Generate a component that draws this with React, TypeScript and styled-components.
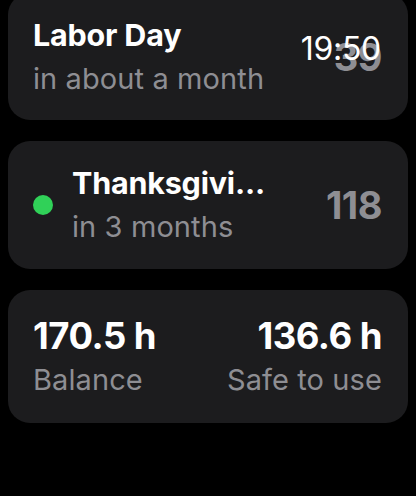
import React from 'react';
import styled, {createGlobalStyle} from 'styled-components';

const Global = createGlobalStyle`
  html, body {
    margin: 0;
    background: #000;
    font-family: Inter, "Noto Sans", sans-serif;
    -webkit-font-smoothing: antialiased;
  }
`;

const Screen = styled.div`
  position: relative;
  width: 416px;
  height: 496px;
  overflow: hidden;
  background: #000;
`;

const List = styled.div`
  display: flex;
  flex-direction: column;
  gap: 21px;
  padding: 0 8px;
  margin-top: -7px;
`;

const Card = styled.div<{ $h: number }>`
  height: ${p => p.$h}px;
  box-sizing: border-box;
  background: #1c1c1e;
  border-radius: 22px;
  display: flex;
  align-items: center;
  padding: 0 26px 0 25px;
  gap: 19px;
`;

const Dot = styled.div`
  width: 20px;
  height: 20px;
  border-radius: 50%;
  background: #30d158;
  flex: none;
`;

const Texts = styled.div`
  flex: 1;
  min-width: 0;
  display: flex;
  flex-direction: column;
  gap: 2px;
`;

const Title = styled.div`
  color: #fff;
  font-size: 30.5px;
  font-weight: 700;
  line-height: 42px;
  letter-spacing: -0.2px;
  white-space: nowrap;
`;

const Sub = styled.div`
  color: #8e8e93;
  font-size: 29px;
  font-weight: 400;
  line-height: 42px;
  letter-spacing: 0.1px;
  white-space: nowrap;
`;

const Count = styled.div`
  color: #8e8e93;
  font-size: 38px;
  font-weight: 700;
  letter-spacing: -0.5px;
  flex: none;
`;

const Stat = styled.div<{ $right?: boolean }>`
  flex: 1;
  display: flex;
  flex-direction: column;
  align-items: ${p => (p.$right ? 'flex-end' : 'flex-start')};
`;

const Value = styled.div`
  color: #fff;
  font-size: 36.5px;
  font-weight: 700;
  line-height: 46px;
  letter-spacing: -0.5px;
`;

const Clock = styled.div`
  position: absolute;
  top: 29px;
  right: 35px;
  color: #fff;
  font-size: 32px;
  font-weight: 400;
  letter-spacing: -0.3px;
`;

export default function App() {
  return (
    <Screen>
      <Global/>
      <List>
        <Card $h={127}>
          <Texts>
            <Title>Labor Day</Title>
            <Sub>in about a month</Sub>
          </Texts>
          <Count>39</Count>
        </Card>
        <Card $h={128}>
          <Dot/>
          <Texts>
            <Title>Thanksgivi...</Title>
            <Sub>in 3 months</Sub>
          </Texts>
          <Count>118</Count>
        </Card>
        <Card $h={133}>
          <Stat>
            <Value>170.5 h</Value>
            <Sub>Balance</Sub>
          </Stat>
          <Stat $right>
            <Value>136.6 h</Value>
            <Sub>Safe to use</Sub>
          </Stat>
        </Card>
      </List>
      <Clock>19:50</Clock>
    </Screen>
  );
}
